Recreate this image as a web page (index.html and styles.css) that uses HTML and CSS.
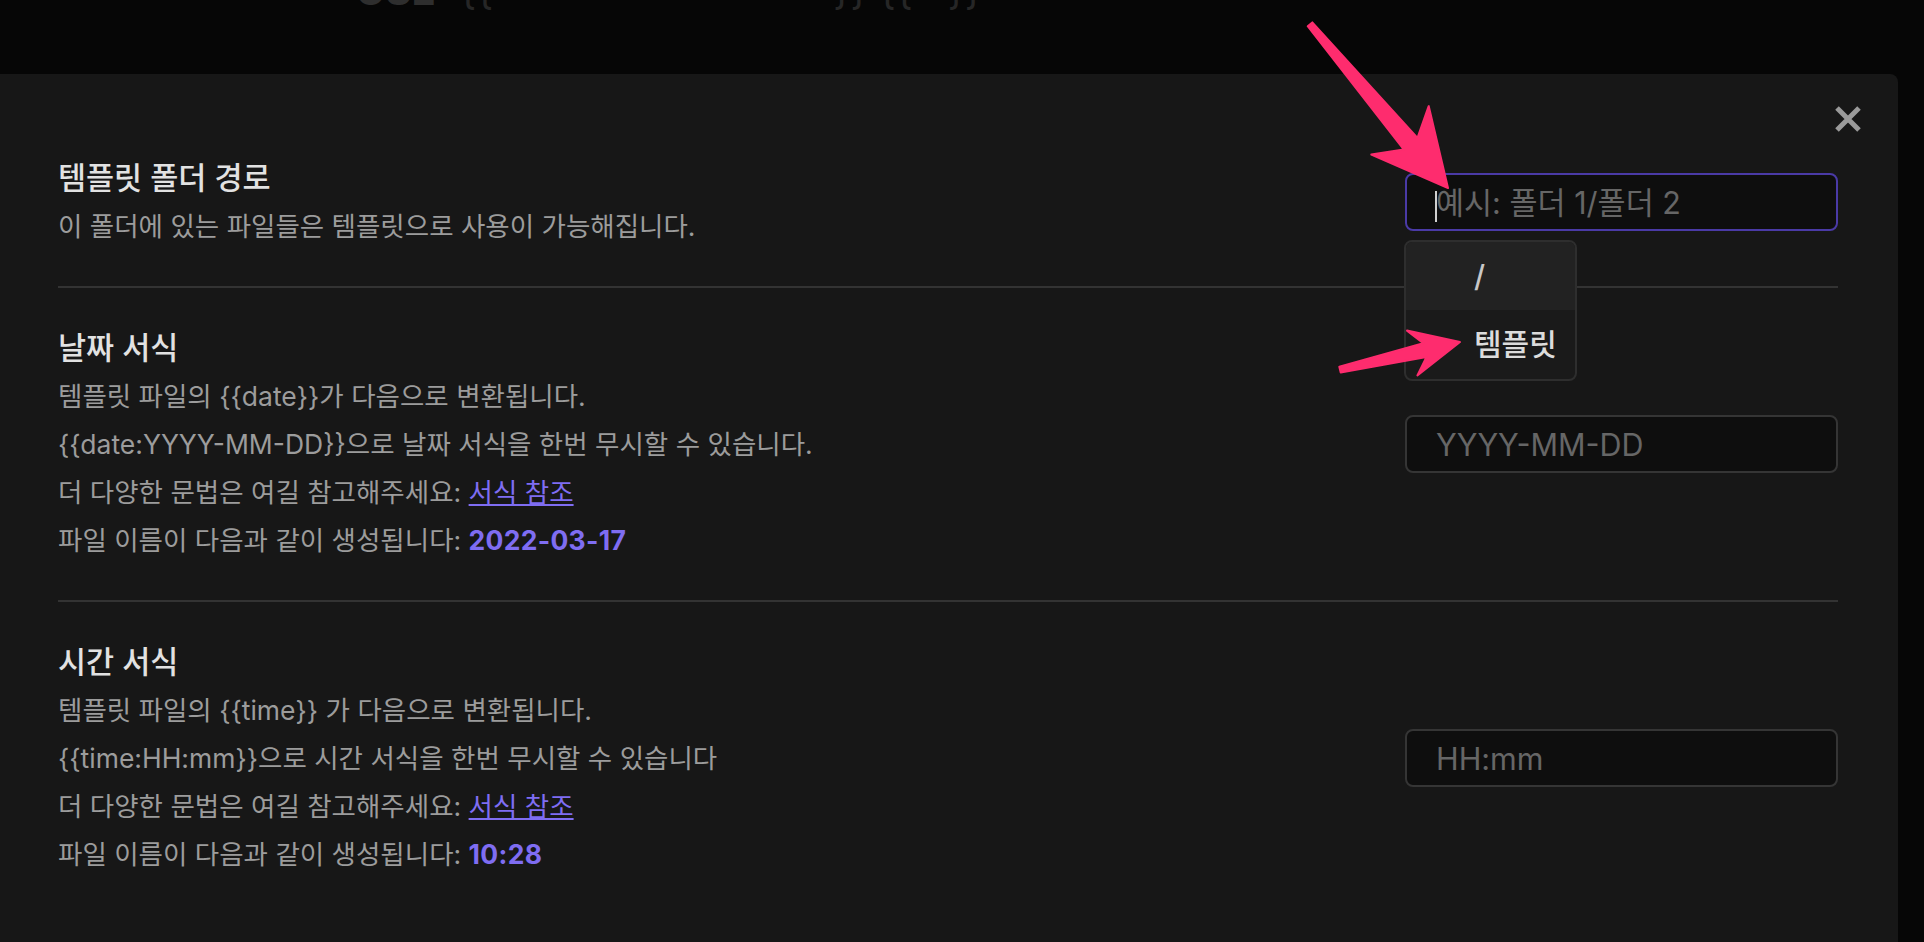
FILE: index.html
```html
<!DOCTYPE html>
<html lang="ko">
<head>
    <meta charset="UTF-8">
    <meta name="viewport" content="width=device-width, initial-scale=1.0">
    <title>템플릿 설정</title>
    <link rel="stylesheet" href="styles.css">
</head>
<body>
    <div class="behind">
        <div class="behind-line">
            <span class="behind-key">USE</span>
            <span class="behind-code">{{<span class="behind-gap wide"></span>}} {{<span class="behind-gap"></span>}}</span>
        </div>
    </div>

    <div class="modal">
        <button class="modal-close" type="button" aria-label="닫기">
            <svg width="28" height="28" viewBox="0 0 28 28">
                <path d="M3 3 L25 25 M25 3 L3 25" stroke="#9a9a9a" stroke-width="5" fill="none"/>
            </svg>
        </button>

        <div class="setting-item">
            <div class="setting-info">
                <div class="setting-name">템플릿 폴더 경로</div>
                <div class="setting-desc">이 폴더에 있는 파일들은 템플릿으로 사용이 가능해집니다.</div>
            </div>
            <div class="setting-control">
                <input type="text" class="is-focused" placeholder="예시: 폴더 1/폴더 2">
                <span class="caret"></span>
                <div class="suggestion-list">
                    <div class="suggestion-item is-selected">/</div>
                    <div class="suggestion-item">템플릿</div>
                </div>
            </div>
        </div>

        <div class="setting-item">
            <div class="setting-info">
                <div class="setting-name">날짜 서식</div>
                <div class="setting-desc">템플릿 파일의 {{date}}가 다음으로 변환됩니다.</div>
                <div class="setting-desc">{{date:YYYY-MM-DD}}으로 날짜 서식을 한번 무시할 수 있습니다.</div>
                <div class="setting-desc">더 다양한 문법은 여길 참고해주세요: <a href="#">서식 참조</a></div>
                <div class="setting-desc">파일 이름이 다음과 같이 생성됩니다: <b class="accent">2022-03-17</b></div>
            </div>
            <div class="setting-control">
                <input type="text" placeholder="YYYY-MM-DD">
            </div>
        </div>

        <div class="setting-item">
            <div class="setting-info">
                <div class="setting-name">시간 서식</div>
                <div class="setting-desc">템플릿 파일의 {{time}} 가 다음으로 변환됩니다.</div>
                <div class="setting-desc">{{time:HH:mm}}으로 시간 서식을 한번 무시할 수 있습니다</div>
                <div class="setting-desc">더 다양한 문법은 여길 참고해주세요: <a href="#">서식 참조</a></div>
                <div class="setting-desc">파일 이름이 다음과 같이 생성됩니다: <b class="accent">10:28</b></div>
            </div>
            <div class="setting-control">
                <input type="text" placeholder="HH:mm">
            </div>
        </div>
    </div>

    <!-- annotation arrows drawn over the screenshot -->
    <svg class="marks" width="1924" height="942" viewBox="0 0 1924 942">
        <polygon fill="#fe2c6e" stroke="#fe2c6e" stroke-width="2" stroke-linejoin="round"
            points="1448,188 1428.7,106.1 1417.5,137.8 1312.3,22.4 1307.7,26.2 1403.7,149.4 1371.3,154.5"/>
        <polygon fill="#fe2c6e" stroke="#fe2c6e" stroke-width="2" stroke-linejoin="round"
            points="1460,342 1407,330.6 1423.3,343.3 1339.3,366.7 1340.7,372.5 1426.5,356.9 1417.4,375.4"/>
    </svg>
</body>
</html>
```

FILE: styles.css
```css
body {
    margin: 0;
    height: 942px;
    overflow: hidden;
    position: relative;
    background: #060606;
    font-family: Inter, "Noto Sans CJK KR", sans-serif;
    color: #dcdcdc;
}

.behind {
    display: flow-root;
    height: 74px;
    padding-left: 356px;
    white-space: nowrap;
}

.behind-line {
    margin-top: -29px;
    font-size: 40px;
    line-height: 40px;
    font-weight: 700;
}

.behind-key {
    color: #2e2e2e;
}

.behind-code {
    margin-left: 14px;
    color: #262626;
    font-weight: 400;
}

.behind-gap {
    display: inline-block;
    width: 35px;
}

.behind-gap.wide {
    width: 340px;
}

.modal {
    position: relative;
    box-sizing: border-box;
    height: 868px;
    margin-right: 26px;
    padding: 44px 60px 0 58px;
    background: #171717;
    border-radius: 0 8px 0 0;
}

.modal-close {
    position: absolute;
    top: 31px;
    right: 36px;
    width: 28px;
    height: 28px;
    padding: 0;
    border: none;
    background: none;
    cursor: pointer;
}

.modal-close svg {
    display: block;
}

.setting-item {
    display: flex;
    align-items: center;
    gap: 40px;
    padding: 36px 0;
}

.setting-item + .setting-item {
    border-top: 2px solid #333;
}

.setting-info {
    flex: 1;
}

.setting-name {
    font-size: 30.5px;
    line-height: 48px;
    font-weight: 500;
    color: #e2e2e2;
}

.setting-desc {
    font-size: 26.5px;
    line-height: 48px;
    color: #9c9c9c;
}

.setting-desc a {
    color: #7f6df2;
}

.accent {
    color: #7f6df2;
    font-weight: 700;
    letter-spacing: 0.3px;
}

.setting-control {
    position: relative;
}

input {
    display: block;
    box-sizing: border-box;
    width: 433px;
    height: 58px;
    padding: 0 20px 0 29px;
    border: 2px solid #353535;
    border-radius: 8px;
    background: #0e0e0e;
    color: #ddd;
    font-family: inherit;
    font-size: 30.5px;
    outline: none;
}

input::placeholder {
    color: #666;
}

input.is-focused {
    border-color: #4a3aa6;
}

.caret {
    position: absolute;
    left: 30px;
    top: 18px;
    width: 2px;
    height: 31px;
    background: #d0d0d0;
}

.suggestion-list {
    position: absolute;
    top: 67px;
    left: -1px;
    width: 173px;
    box-sizing: border-box;
    border: 2px solid #2e2e2e;
    border-radius: 8px;
    background: #1a1a1a;
    overflow: hidden;
    z-index: 2;
}

.suggestion-item {
    height: 69px;
    line-height: 69px;
    padding-left: 68px;
    font-size: 30px;
    font-weight: 500;
    color: #dcdcdc;
}

.suggestion-item.is-selected {
    height: 68px;
    line-height: 68px;
    background: #222;
    color: #c8c8c8;
}

.marks {
    position: absolute;
    top: 0;
    left: 0;
    pointer-events: none;
    z-index: 10;
}
```
